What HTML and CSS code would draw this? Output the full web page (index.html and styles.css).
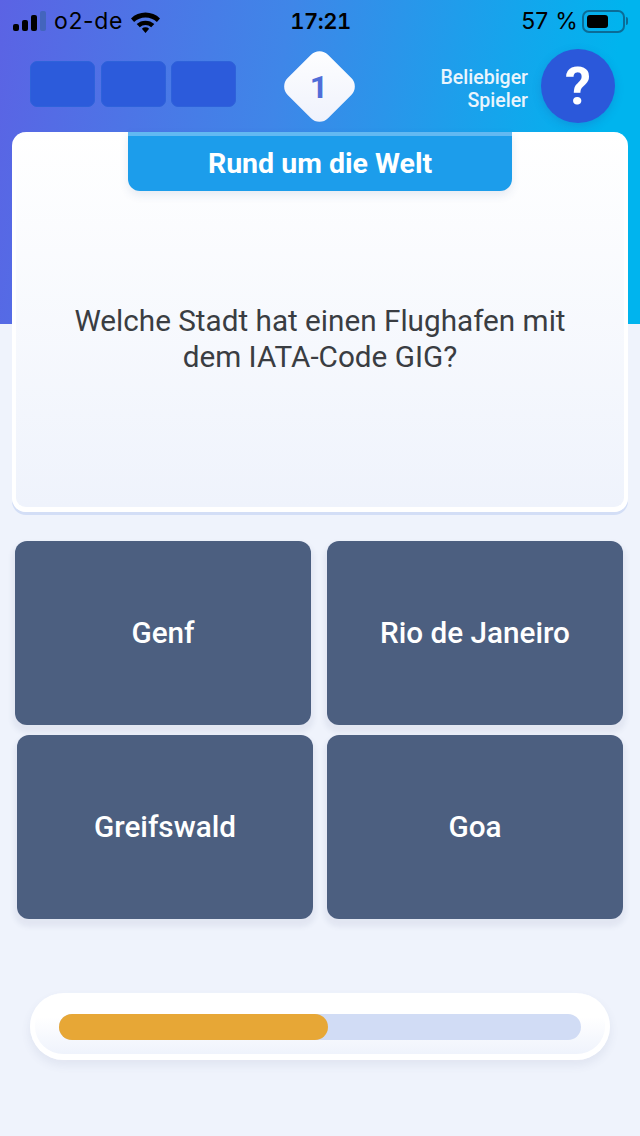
FILE: index.html
```html
<!DOCTYPE html>
<html lang="en">

<head>
    <meta charset="UTF-8">
    <meta name="viewport" content="width=device-width, initial-scale=1.0">
    <title>Quiz</title>
    <link rel="stylesheet" href="styles.css">
</head>

<body>
    <div class="app">
        <div class="hero"></div>

        <div class="status-bar">
            <div class="status-left">
                <div class="signal">
                    <span class="s1"></span>
                    <span class="s2"></span>
                    <span class="s3"></span>
                    <span class="s4"></span>
                </div>
                <span class="carrier">o2-de</span>
                <svg class="wifi" width="29" height="23" viewBox="1 0 28 22">
                    <path d="M1 8 A20 20 0 0 1 29 8 L26 11.5 A16 16 0 0 0 4 11.5 Z M6.5 13.5 A12.5 12.5 0 0 1 23.500 13.500 L20.500 16.500 A8.500 8.500 0 0 0 9.500 16.500 Z M11.500 18 A5 5 0 0 1 18.500 18 L15 22 Z" fill="#000" />
                </svg>
            </div>
            <div class="status-time">17:21</div>
            <div class="status-right">
                <span class="percent">57 %</span>
                <div class="battery"><div class="battery-level"></div></div>
                <div class="battery-tip"></div>
            </div>
        </div>

        <div class="top-row">
            <div class="slots">
                <div class="slot"></div>
                <div class="slot"></div>
                <div class="slot"></div>
            </div>
            <div class="round-badge"><span>1</span></div>
            <div class="player">
                <div class="player-name">Beliebiger<br>Spieler</div>
                <div class="avatar">?</div>
            </div>
        </div>

        <div class="question-card">
            <div class="category">Rund um die Welt</div>
            <div class="question">Welche Stadt hat einen Flughafen mit dem IATA-Code GIG?</div>
        </div>

        <div class="answers">
            <div class="answer-row">
                <div class="answer">Genf</div>
                <div class="answer">Rio de Janeiro</div>
            </div>
            <div class="answer-row shifted">
                <div class="answer">Greifswald</div>
                <div class="answer">Goa</div>
            </div>
        </div>

        <div class="timer">
            <div class="timer-track">
                <div class="timer-fill" style="width: 51.5%"></div>
            </div>
        </div>
    </div>
</body>

</html>
```

FILE: styles.css
```css
/* Global styles */

* {
    box-sizing: border-box;
}

body {
    margin: 0;
    font-family: Roboto, "Liberation Sans", sans-serif;
    background-color: #eff3fc;
}

.app {
    position: relative;
    width: 640px;
    height: 1136px;
    overflow: hidden;
}

/* Gradient behind the header, card sits on top of it */

.hero {
    position: absolute;
    top: 0;
    left: 0;
    width: 640px;
    height: 324px;
    background: linear-gradient(100deg, #5b63e4 0%, #3f86e8 42%, #00b4ee 90%);
}

/* Status bar */

.status-bar {
    position: relative;
    height: 42px;
    display: flex;
    justify-content: space-between;
    align-items: center;
    padding: 0 12px 0 13px;
    font-family: Inter, "Liberation Sans", sans-serif;
    font-size: 23px;
    color: #000;
}

.status-left {
    display: flex;
    align-items: center;
    gap: 8px;
    width: 200px;
}

.signal {
    display: flex;
    align-items: flex-end;
    gap: 3px;
    height: 20px;
}

.signal span {
    width: 6px;
    background-color: #000;
    border-radius: 2px;
}

.signal .s1 {
    height: 7px;
}

.signal .s2 {
    height: 11px;
}

.signal .s3 {
    height: 16px;
}

.signal .s4 {
    height: 20px;
    background-color: #4365bd;
}

.carrier {
    letter-spacing: 0.6px;
}

.status-time {
    font-size: 22px;
    font-weight: 600;
    font-variant-numeric: tabular-nums;
    letter-spacing: -0.5px;
}

.status-right {
    display: flex;
    align-items: center;
    justify-content: flex-end;
    width: 200px;
}

.percent {
    letter-spacing: 0.2px;
}

.battery {
    width: 43px;
    height: 23px;
    margin-left: 4px;
    padding: 3px;
    border: 2px solid #0b6c97;
    border-radius: 7px;
}

.battery-level {
    width: 21px;
    height: 13px;
    background-color: #000;
    border-radius: 3px;
}

.battery-tip {
    width: 2px;
    height: 8px;
    margin-left: 1px;
    background-color: #0b6c97;
    border-radius: 0 2px 2px 0;
}

/* Round header */

.top-row {
    position: relative;
    height: 90px;
    padding: 0 25px 0 30px;
    display: grid;
    grid-template-columns: 261px 57px 1fr;
    align-items: center;
}

.slots {
    display: flex;
    gap: 5.5px;
    margin-top: -6px;
}

.slot {
    width: 65px;
    height: 46px;
    background-color: #2c5bdb;
    border: 1px solid #2e62da;
    border-radius: 7px;
}

.round-badge {
    width: 57px;
    height: 57px;
    margin-top: -1px;
    display: flex;
    align-items: center;
    justify-content: center;
    background: linear-gradient(135deg, #ffffff 0%, #eef1fc 100%);
    border-radius: 12px;
    transform: rotate(45deg);
}

.round-badge span {
    transform: rotate(-45deg);
    font-size: 32px;
    font-weight: 700;
    color: #506dd8;
}

.player {
    display: flex;
    align-items: center;
    justify-content: flex-end;
    gap: 13px;
    margin-top: -2px;
}

.player-name {
    margin-top: 6px;
    font-size: 19.5px;
    line-height: 23px;
    font-weight: 500;
    text-align: right;
    color: #eaf5fd;
}

.avatar {
    width: 74px;
    height: 74px;
    flex-shrink: 0;
    display: flex;
    align-items: center;
    justify-content: center;
    font-size: 52px;
    font-weight: 700;
    color: #fff;
    background-color: #2b58da;
    border-radius: 50%;
    box-shadow: 0 3px 8px rgba(30, 80, 170, 0.25);
}

/* Question card */

.question-card {
    position: relative;
    width: 616px;
    height: 380px;
    margin-left: 12px;
    background: linear-gradient(180deg, #ffffff 0%, #eff3fc 100%);
    border: 4px solid #fff;
    border-top-width: 0;
    border-bottom-width: 5px;
    border-radius: 14px;
    box-shadow: 0 3px 0 #d3def6;
}

.category {
    width: 384px;
    height: 59px;
    margin: 0 auto;
    border-top: 4px solid #62b9f2;
    border-radius: 0 0 12px 12px;
    background-color: #1c9deb;
    box-shadow: 0 4px 10px rgba(60, 90, 150, 0.12);
    color: #fff;
    font-size: 28.5px;
    font-weight: 700;
    line-height: 55px;
    text-align: center;
}

.question {
    width: 520px;
    margin: 112px auto 0;
    color: #3a3d42;
    font-size: 29.7px;
    line-height: 36px;
    text-align: center;
}

/* Answer buttons */

.answers {
    position: relative;
    margin-top: 29px;
    padding: 0 17px 0 15px;
    display: flex;
    flex-direction: column;
    gap: 10px;
}

.answer-row {
    display: flex;
    gap: 16px;
}

.answer-row.shifted {
    padding-left: 2px;
    gap: 14px;
}

.answer {
    width: 296px;
    height: 184px;
    padding-bottom: 2px;
    display: flex;
    align-items: center;
    justify-content: center;
    background-color: #4c5f80;
    border-radius: 12px;
    box-shadow: 0 5px 5px 3px rgba(76, 95, 127, 0.08);
    color: #fff;
    font-size: 29.7px;
    font-weight: 500;
}

/* Timer */

.timer {
    position: relative;
    width: 580px;
    height: 67px;
    margin: 74px 0 0 30px;
    padding: 21px 29px 0;
    background: linear-gradient(180deg, #ffffff 40%, #eff3fc 100%);
    border: 5px solid #fff;
    border-top-width: 0;
    border-bottom-width: 6px;
    border-radius: 34px;
    box-shadow: 0 5px 8px 1px rgba(76, 95, 127, 0.08);
}

.timer-track {
    height: 26px;
    background-color: #d1dcf5;
    border-radius: 13px;
    margin: 0 -5px;
}

.timer-fill {
    height: 26px;
    background-color: #e7a736;
    border-radius: 13px;
}
```
